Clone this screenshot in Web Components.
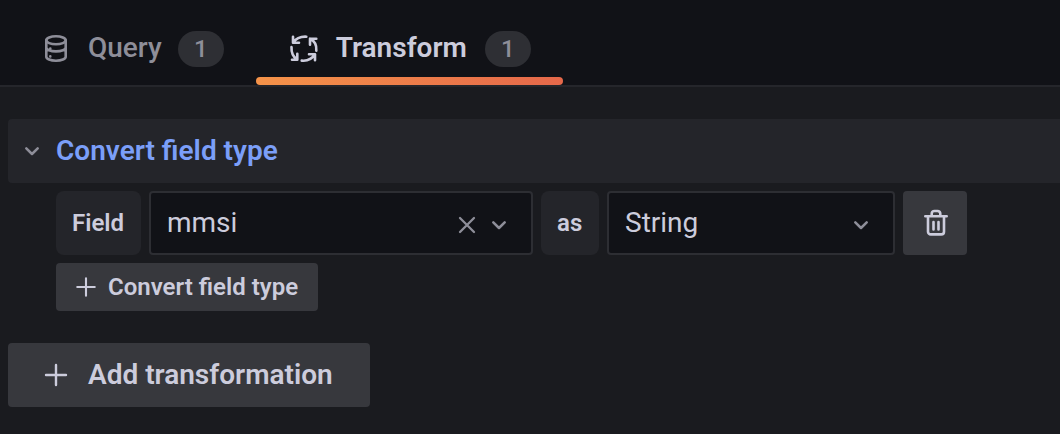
<!DOCTYPE html>
<html lang="en">
<head>
<meta charset="utf-8">
<title>Transform</title>
<style>
  :root {
    --canvas: #111217; --primary: #1a1b1f; --secondary: #24252a; --line: #2d2e33;
    --button: #37383d; --text: #ccccdc; --muted: #8e8e99; --link: #7b9ff9;
  }
  body { margin: 0; min-height: 100vh; background: var(--primary); color: var(--text); font: 400 28px/32px Roboto, sans-serif; }
</style>
</head>
<body>
<query-editor-panel></query-editor-panel>
<script>
const svg = (name, size = 32) => `<ui-icon name="${name}" style="--size:${size}px"></ui-icon>`;

const ICONS = {
  database: '<g stroke-width="2.6"><ellipse cx="16" cy="7.3" rx="9.7" ry="4"/><path d="M6.300 7.300v16.500c0 2.200 4.200 3.900 9.700 3.900s9.700-1.700 9.700-3.900v-16.500M6.300 14.500c0 2.200 4.200 3.900 9.700 3.900s9.700-1.700 9.700-3.900"/></g><path d="M10.300 15.600v.1M10.300 23.400v.1" stroke-width="2.600"/>',
  process: '<path d="M5 3.700v6h6M18.300 3.700C12 3.400 8 5.500 5 9.700M28.300 5.700H22v6M28.300 17.700C28.800 12.500 26.500 8 22 5.700M27 27.300v-6h-6M13.700 27.600C19.500 28.200 24 26 27 21.300M4 26.700h5.300v-6M3.500 14C3.200 19.500 5 24 9.300 26.700" stroke-width="2.600"/>',
  down: '<path d="M10.300 13.300l5.700 5.700 5.700-5.700" stroke-width="2.500"/>',
  times: '<path d="M9 9l14 14M23 9L9 23" stroke-width="2.300"/>',
  plus: '<path d="M16 6v20M6 16h20" stroke-width="2.400"/>',
  trash: '<path d="M6.300 9.300h21.400M9 9.300v15.400a2.700 2.700 0 0 0 2.700 2.700h10.600a2.700 2.700 0 0 0 2.700-2.700V9.300M12.700 9V6.700A2.700 2.700 0 0 1 15.400 4h3.200a2.700 2.700 0 0 1 2.700 2.700V9M14.500 15v7.500M19.500 15v7.500" stroke-width="2.600"/>'
};

function define(name, css, markup) {
  customElements.define(name, class extends HTMLElement {
    constructor() {
      super();
      this.attachShadow({ mode: 'open' }).innerHTML =
        `<style>*{box-sizing:border-box}${css}</style>${typeof markup === 'function' ? markup(this) : markup}`;
    }
  });
}

define('ui-icon', `
  :host { display: block; flex: none; width: var(--size); height: var(--size); }
  svg { display: block; width: 100%; height: 100%; fill: none; stroke: currentColor; stroke-width: 2.4; stroke-linecap: round; stroke-linejoin: round; }`,
  el => `<svg viewBox="0 0 32 32" aria-hidden="true">${ICONS[el.getAttribute('name')]}</svg>`);

define('ui-tab', `
  :host { display: block; color: var(--muted); }
  a { display: flex; align-items: center; height: 85px; padding: 12px 32px 0; color: inherit; font-weight: 500; text-decoration: none; }
  .label { min-width: var(--label, 0); margin: 0 16px; padding-bottom: 2px; }
  .count { min-width: 46px; padding: 2px 0; border-radius: 18px; background: #2e2f34; color: var(--muted); font-size: 24px; text-align: center; }
  :host([active]) { color: var(--text); }
  :host([active]) .label { font-weight: 600; }
  :host([active]) a { position: relative; }
  :host([active]) a::after { content: ""; position: absolute; inset: auto 0 0; height: 8px; border-radius: 4px; background: linear-gradient(90deg, #f59349, #e5684a); }`,
  el => `<a href="#">${svg(el.getAttribute('icon'))}<span class="label"><slot></slot></span><span class="count">${el.getAttribute('count')}</span></a>`);

define('tabs-bar', `
  :host { display: flex; padding: 0 8px; background: var(--canvas); border-bottom: 2px solid #25262b; }`,
  '<slot></slot>');

define('ui-button', `
  :host { display: block; }
  button { display: flex; align-items: center; gap: 16px; min-width: var(--min, 0); height: 64px; padding: 0 32px; border: 0; border-radius: 4px; background: var(--button); color: inherit; font: inherit; font-weight: 600; }
  :host([small]) button { height: 48px; gap: 8px; padding: 0 16px; font-size: 24px; }
  :host([square]) button { padding: 0 16px; gap: 0; }`,
  el => `<button type="button" aria-label="${el.getAttribute('label')}">${svg(el.getAttribute('icon'), el.hasAttribute('small') ? 28 : 32)}<slot></slot></button>`);

define('ui-select', `
  :host { display: grid; flex: 0 1 var(--width); height: 64px; align-items: center; }
  select { grid-area: 1 / 1; width: 100%; height: 100%; padding: 0 16px; border: 2px solid var(--line); border-radius: 4px; appearance: none; background: var(--canvas); color: inherit; font: inherit; }
  .tools { grid-area: 1 / 1; justify-self: end; display: flex; padding: 4px 18px 0 0; color: var(--muted); pointer-events: none; }
  button { padding: 0; border: 0; background: none; color: inherit; pointer-events: auto; }`,
  el => `<select aria-label="${el.getAttribute('label')}"><option>${el.getAttribute('value')}</option></select>
    <div class="tools">${el.hasAttribute('clearable') ? `<button type="button" aria-label="Clear">${svg('times')}</button>` : ''}${svg('down')}</div>`);

define('field-label', `
  :host { display: flex; box-sizing: border-box; align-items: center; min-width: var(--min, 58px); height: 64px; padding: 0 16px; border-radius: 8px; background: var(--secondary); font-size: 24px; font-weight: 600; }`,
  '<slot></slot>');

define('transform-row', `
  :host { display: block; }
  header { display: flex; align-items: center; gap: 8px; height: 64px; padding: 0 8px; border-radius: 4px 0 0 4px; background: var(--secondary); color: var(--muted); }
  h2 { margin: 0; color: var(--link); font: inherit; font-weight: 600; }
  .body { display: grid; justify-items: start; gap: 8px; padding: 8px 0 0 48px; }
  .fields { display: flex; gap: 8px; width: 100%; }`,
  `<header>${svg('down')}<h2>Convert field type</h2></header>
   <div class="body">
     <div class="fields">
       <field-label style="--min:85px">Field</field-label>
       <ui-select label="Field" value="mmsi" clearable style="--width:384px"></ui-select>
       <field-label>as</field-label>
       <ui-select label="Type" value="String" style="--width:288px"></ui-select>
       <ui-button square icon="trash" label="Remove"></ui-button>
     </div>
     <ui-button small icon="plus" label="Convert field type" style="--min:262px">Convert field type</ui-button>
   </div>`);

define('query-editor-panel', `
  :host { display: block; }
  main { display: grid; justify-items: start; gap: 32px; padding: 32px 0 24px 8px; }
  transform-row { width: 100%; }`,
  `<tabs-bar><ui-tab icon="database" count="1">Query</ui-tab><ui-tab active icon="process" count="1" style="--label:133px">Transform</ui-tab></tabs-bar>
   <main><transform-row></transform-row><ui-button icon="plus" label="Add transformation" style="--min:362px">Add transformation</ui-button></main>`);
</script>
</body>
</html>
